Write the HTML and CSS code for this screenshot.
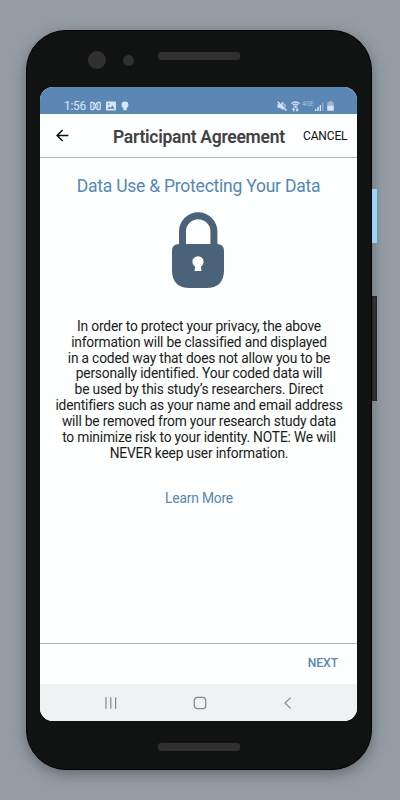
FILE: index.html
```html
<!DOCTYPE html>
<html lang="en">
<head>
    <meta charset="UTF-8">
    <meta name="viewport" content="width=device-width, initial-scale=1.0">
    <title>Participant Agreement</title>
    <link rel="stylesheet" href="styles.css">
</head>
<body>
    <div class="phone">
        <span class="side-button power"></span>
        <span class="side-button volume"></span>

        <div class="phone-top">
            <span class="camera"></span>
            <span class="sensor"></span>
            <span class="speaker"></span>
        </div>

        <div class="screen">
            <div class="status-bar">
                <div class="status-left">
                    <span class="time">1:56</span>
                    <svg width="11" height="10" viewBox="0 0 11 10" fill="none" stroke="currentColor" stroke-width="1.2">
                        <path d="M3 8.7H1.7Q.8 8.7.8 7.8V2.2Q.8 1.3 1.7 1.3H3Q4 1.3 4.5 2.6L6.5 7.4Q7 8.7 8 8.7H9.3Q10.2 8.7 10.2 7.8V2.2Q10.2 1.3 9.3 1.3H8Q7 1.3 6.5 2.6L4.5 7.4Q4 8.7 3 8.7Z"/>
                        <path d="M3.2 2V8M7.8 2V8" stroke-width=".8"/>
                    </svg>
                    <svg width="10" height="10" viewBox="0 0 10 10" fill="currentColor" fill-rule="evenodd">
                        <path d="M1 .5H9Q10 .5 10 1.5V8.5Q10 9.5 9 9.5H1Q0 9.5 0 8.5V1.5Q0 .5 1 .5ZM1.3 7.8H8.8L6.4 4.6 4.6 6.8 3.3 5.4ZM2 2.2V3.7H3.5V2.2Z"/>
                    </svg>
                    <svg class="bulb" width="8" height="10" viewBox="0 0 8 10" fill="currentColor">
                        <circle cx="4" cy="3.8" r="3.4"/>
                        <path d="M2.4 6H5.6V9.2H2.4Z"/>
                    </svg>
                </div>
                <div class="status-right">
                    <svg width="10" height="10" viewBox="0 0 10 10" fill="currentColor">
                        <path d="M.5 3.2H3L6.4.6V9.3L3 6.7H.5Z"/>
                        <path d="M7.4 2.8Q9.2 4.8 7.4 6.6" fill="none" stroke="currentColor"/>
                        <path d="M1.6 .2L10 8.6" stroke="#5b87b5" stroke-width=".8"/>
                        <path d="M.7.7L9.5 9.5" stroke="currentColor" stroke-width="1.4"/>
                    </svg>
                    <svg class="wifi" width="9" height="11" viewBox="0 0 9 11" fill="none" stroke="currentColor" stroke-width="1.2">
                        <path d="M.4 2.6Q4.5-1 8.6 2.6M1.9 4.2Q4.5 2 7.1 4.2"/>
                        <path d="M2.8 5.2Q4.5 4 6.2 5.2L4.5 7Z" fill="currentColor" stroke="none"/>
                        <path d="M.8 8.5L2.6 6.3 4.2 8.2H3.3V10.6H2V8.5ZM5.4 6.4H6.7V8.6H8L6 10.7 4.6 8.8H5.4Z" fill="currentColor" stroke="none"/>
                    </svg>
                    <span class="network">4GE</span>
                    <svg class="signal" width="9" height="9" viewBox="0 0 9 9" fill="currentColor">
                        <path d="M0 7H1.4V9H0ZM2.3 5H3.8V9H2.3ZM4.7 3H6V9H4.7Z"/>
                        <path d="M7 .5H8.5V9H7Z" opacity=".4"/>
                    </svg>
                    <svg class="battery" width="7" height="10" viewBox="0 0 7 10" fill="currentColor">
                        <path d="M2.2 0H4.8V1.2H6.2Q6.8 1.2 6.8 1.8V4.5H.2V1.8Q.2 1.2.8 1.2H2.2Z" opacity=".5"/>
                        <path d="M.2 4.5H6.8V9.2Q6.8 9.8 6.2 9.8H.8Q.2 9.8.2 9.2Z"/>
                    </svg>
                </div>
            </div>

            <div class="app-bar">
                <svg class="back" width="13" height="13" viewBox="0 0 13 13" fill="none" stroke="currentColor" stroke-width="1.5">
                    <path d="M12.4 6.5H1.3M6.6 1L1.1 6.5 6.6 12"/>
                </svg>
                <h1>Participant Agreement</h1>
                <span class="cancel">CANCEL</span>
            </div>

            <div class="content">
                <h2>Data Use &amp; Protecting Your Data</h2>
                <svg class="lock" width="52" height="76" viewBox="0 0 52 76">
                    <path d="M10.5 38V19.5A15.7 15.7 0 0 1 41.9 19.5V38" fill="none" stroke="currentColor" stroke-width="7"/>
                    <path d="M7 32H45Q52 32 52 39V58Q52 76 34 76H18Q0 76 0 58V39Q0 32 7 32Z" fill="currentColor"/>
                    <circle cx="26" cy="49.8" r="5.6" fill="#fff"/>
                    <path d="M23.5 52H28.5L29.5 59H22.5Z" fill="#fff"/>
                </svg>
                <p class="message">
                    In order to protect your privacy, the above<br>
                    information will be classified and displayed<br>
                    in a coded way that does not allow you to be<br>
                    personally identified. Your coded data will<br>
                    be used by this study’s researchers. Direct<br>
                    identifiers such as your name and email address<br>
                    will be removed from your research study data<br>
                    to minimize risk to your identity. NOTE: We will<br>
                    NEVER keep user information.
                </p>
                <span class="learn-more">Learn More</span>
            </div>

            <div class="footer">
                <span class="next">NEXT</span>
            </div>

            <div class="nav-bar">
                <svg width="14" height="12" viewBox="0 0 14 12" fill="none" stroke="currentColor" stroke-width="1.2">
                    <path d="M2 .3V11.7M6.8 .3V11.7M11.6 .3V11.7"/>
                </svg>
                <svg width="14" height="14" viewBox="0 0 14 14" fill="none" stroke="currentColor" stroke-width="1.3">
                    <rect x="1.3" y="1.3" width="11.4" height="11.4" rx="3.3"/>
                </svg>
                <svg width="14" height="12" viewBox="0 0 14 12" fill="none" stroke="currentColor" stroke-width="1.2">
                    <path d="M9.6 .6L4 6 9.6 11.4"/>
                </svg>
            </div>
        </div>

        <div class="phone-bottom">
            <span class="speaker"></span>
        </div>
    </div>
</body>
</html>
```

FILE: styles.css
```css
* {
    box-sizing: border-box;
}

body {
    margin: 0;
    height: 800px;
    padding: 30px 0 0 26px;
    background-color: #959da4;
    font-family: Roboto, sans-serif;
    overflow: hidden;
}

svg {
    display: block;
    flex-shrink: 0;
}

.phone {
    position: relative;
    display: flex;
    flex-direction: column;
    width: 346px;
    height: 740px;
    padding: 0 14px 0 13px;
    background-color: #111312;
    border: 1px solid #000;
    border-radius: 40px;
    box-shadow: 0 4px 14px rgba(50, 65, 65, 0.55);
}

/* Side buttons stick out of the frame */
.side-button {
    position: absolute;
    left: 345px;
    width: 4.5px;
}

.power {
    top: 158px;
    height: 54px;
    background-color: #99d3ff;
}

.volume {
    top: 265px;
    height: 105px;
    background-color: #30312f;
    border: 1px solid #252625;
}

.phone-top {
    display: flex;
    flex-shrink: 0;
    height: 56px;
    padding: 20px 0 0 48px;
}

.camera {
    width: 18px;
    height: 18px;
    border-radius: 50%;
    background-color: #303030;
}

.sensor {
    width: 11px;
    height: 11px;
    margin: 3.5px 0 0 17px;
    border-radius: 50%;
    background-color: #303030;
}

.speaker {
    width: 82px;
    height: 8px;
    border-radius: 3px;
    background-color: #303030;
}

.phone-top .speaker {
    margin: 1px 0 0 24px;
}

.screen {
    display: flex;
    flex-direction: column;
    flex-shrink: 0;
    width: 317px;
    height: 634px;
    border-radius: 13px;
    overflow: hidden;
    background-color: #fdfefe;
}

.status-bar {
    display: flex;
    flex-shrink: 0;
    justify-content: space-between;
    height: 27px;
    padding: 14px 23px 0 24px;
    background-color: #5b87b5;
    color: #d9e6f2;
}

.status-left,
.status-right {
    display: flex;
    align-items: center;
    height: 10px;
}

.status-left {
    gap: 4.5px;
}

.time {
    width: 21.5px;
    font-size: 12px;
    line-height: 10px;
    letter-spacing: -0.3px;
}

.bulb {
    margin-left: 1px;
}

.wifi {
    margin-left: 4px;
}

.network {
    width: 12px;
    margin: -5px 0 0 2px;
    font-size: 6.5px;
    line-height: 6px;
    opacity: 0.6;
}

.signal {
    margin-left: 1px;
}

.battery {
    margin-left: 3px;
}

.app-bar {
    display: flex;
    flex-shrink: 0;
    align-items: center;
    height: 44px;
    padding-left: 15.5px;
    border-bottom: 1px solid #b5b5b6;
    color: #111;
}

h1 {
    width: 172px;
    margin: 2px 0 0 44.5px;
    font-size: 17.5px;
    font-weight: 600;
    line-height: 20px;
    letter-spacing: -0.27px;
    white-space: nowrap;
    color: #414245;
}

.cancel {
    margin-left: 18px;
    font-size: 12px;
    letter-spacing: -0.15px;
}

.content {
    display: flex;
    flex: 1;
    flex-direction: column;
    align-items: center;
    padding-top: 18px;
}

h2 {
    margin: 0;
    font-size: 17.5px;
    font-weight: 400;
    line-height: 20px;
    letter-spacing: -0.23px;
    white-space: nowrap;
    color: #5687b4;
}

.lock {
    margin: 16px 1px 0 0;
    color: #4a6378;
}

.message {
    margin: 31px 0 0 1px;
    font-size: 13.8px;
    line-height: 15.83px;
    letter-spacing: -0.19px;
    text-align: center;
    white-space: nowrap;
    color: #1c1c1c;
}

.learn-more {
    margin: 29px 0 0 1px;
    font-size: 13.8px;
    line-height: 16px;
    letter-spacing: -0.19px;
    color: #5687b4;
}

.footer {
    display: flex;
    flex-shrink: 0;
    align-items: center;
    justify-content: flex-end;
    height: 41px;
    padding: 0 19px 2px 0;
    border-top: 1px solid #b2b2b3;
}

.next {
    font-size: 12px;
    font-weight: 500;
    color: #5687b4;
}

.nav-bar {
    display: flex;
    flex-shrink: 0;
    align-items: center;
    justify-content: space-between;
    height: 37px;
    padding: 0 62px 0 64px;
    background-color: #f0f1f3;
    color: #858688;
}

.phone-bottom {
    display: flex;
    justify-content: center;
    padding: 22px 0 0 1px;
}
```
